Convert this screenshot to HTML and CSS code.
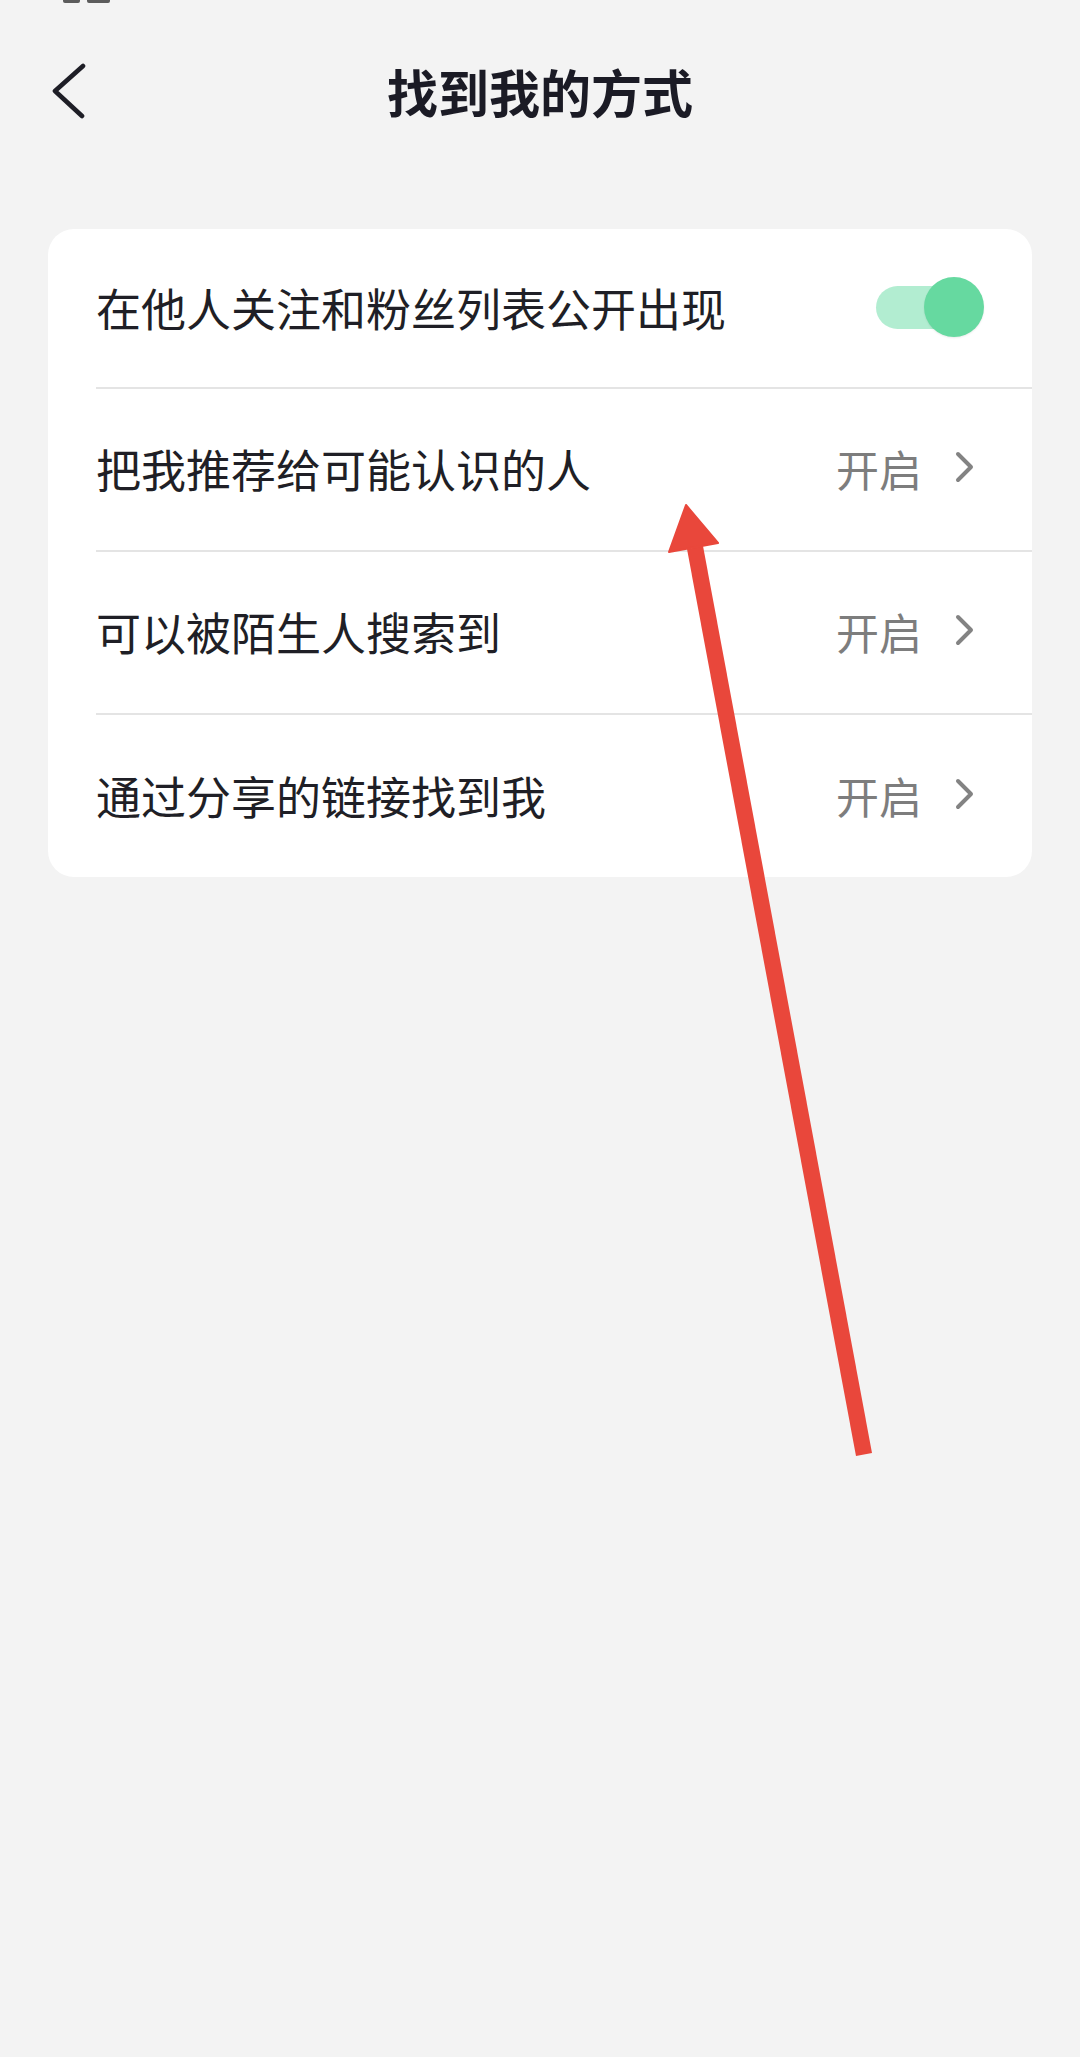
FILE: index.html
```html
<!DOCTYPE html>
<html lang="zh-CN">
<head>
<meta charset="utf-8">
<title>找到我的方式</title>
<link rel="stylesheet" href="styles.css">
</head>
<body>
<div class="page">
  <div class="status"><span class="s1"></span><span class="s2"></span></div>
  <header class="header">
    <div class="back">
      <svg width="34" height="56" viewBox="0 0 34 56"><path d="M31 3 L3 28 L30 53" fill="none" stroke="#1e1e26" stroke-width="4.6" stroke-linecap="round" stroke-linejoin="round"/></svg>
    </div>
    <h1 class="title">找到我的方式</h1>
    <div></div>
  </header>
  <section class="card">
    <div class="row row-first">
      <span class="label">在他人关注和粉丝列表公开出现</span>
      <span class="toggle"><span class="track"></span><span class="knob"></span></span>
    </div>
    <div class="row">
      <span class="label">把我推荐给可能认识的人</span>
      <span class="value">开启</span>
      <svg class="chev" width="22" height="32" viewBox="0 0 22 32"><path d="M4 3 L17 16 L4 29" fill="none" stroke="#838383" stroke-width="4" stroke-linecap="round" stroke-linejoin="round"/></svg>
    </div>
    <div class="row">
      <span class="label">可以被陌生人搜索到</span>
      <span class="value">开启</span>
      <svg class="chev" width="22" height="32" viewBox="0 0 22 32"><path d="M4 3 L17 16 L4 29" fill="none" stroke="#838383" stroke-width="4" stroke-linecap="round" stroke-linejoin="round"/></svg>
    </div>
    <div class="row row-last">
      <span class="label">通过分享的链接找到我</span>
      <span class="value">开启</span>
      <svg class="chev" width="22" height="32" viewBox="0 0 22 32"><path d="M4 3 L17 16 L4 29" fill="none" stroke="#838383" stroke-width="4" stroke-linecap="round" stroke-linejoin="round"/></svg>
    </div>
  </section>
  <svg class="arrow" width="1080" height="2057" viewBox="0 0 1080 2057">
    <polygon points="687,549 703,546 872,1453 856,1456" fill="#e9473b"/>
    <polygon points="686,505 718,543 669,552" fill="#e9473b" stroke="#e9473b" stroke-width="2" stroke-linejoin="round"/>
  </svg>
</div>
</body>
</html>
```
FILE: styles.css
```css
html, body {
  margin: 0;
  padding: 0;
  background: #f3f3f3;
}
body {
  font-family: "Noto Sans CJK SC", "Noto Sans", sans-serif;
  color: #1f1f26;
}
.page {
  position: relative;
  width: 1080px;
  height: 2057px;
  overflow: hidden;
}
.status {
  display: flex;
  gap: 7px;
  height: 3px;
  padding-left: 63px;
}
.status span {
  display: block;
  height: 3px;
  background: #5c5c5c;
  border-radius: 0 0 2px 2px;
}
.status .s1 { width: 17px; }
.status .s2 { width: 23px; }
.header {
  display: grid;
  grid-template-columns: 1fr auto 1fr;
  align-items: center;
  height: 180px;
}
.back {
  display: flex;
  padding-left: 52px;
  margin-bottom: 4px;
}
.back svg { display: block; }
.title {
  margin: 0 0 4px;
  font-size: 51px;
  line-height: 1;
  font-weight: 700;
  color: #1b1b25;
  letter-spacing: 0;
}
.card {
  margin: 46px 48px 0;
  background: #ffffff;
  border-radius: 26px;
  overflow: hidden;
}
.row {
  display: flex;
  align-items: center;
  margin-left: 48px;
  padding-right: 48px;
  height: 161px;
  border-bottom: 2px solid #e4e4e4;
}
.row-first { height: 158px; }
.row-last { height: 162px; border-bottom: none; }
.label {
  flex: 1;
  font-size: 45px;
  line-height: 1;
  color: #1f1f26;
  margin-top: -2px;
}
.value {
  font-size: 43px;
  line-height: 1;
  color: #7d7d7d;
  margin-top: -2px;
}
.chev {
  display: block;
  margin-left: 32px;
  margin-right: 8px;
  margin-top: -5px;
}
.toggle {
  position: relative;
  display: flex;
  align-items: center;
  width: 108px;
  height: 60px;
  margin-top: -2px;
}
.track {
  display: block;
  width: 92px;
  height: 43px;
  border-radius: 22px;
  background: #b2edd1;
}
.knob {
  position: absolute;
  right: 0;
  top: 0;
  width: 60px;
  height: 60px;
  border-radius: 50%;
  background: #66d9a0;
  box-shadow: 0 1px 2px rgba(0, 0, 0, 0.08);
}
.arrow {
  position: absolute;
  left: 0;
  top: 0;
  pointer-events: none;
}
```
